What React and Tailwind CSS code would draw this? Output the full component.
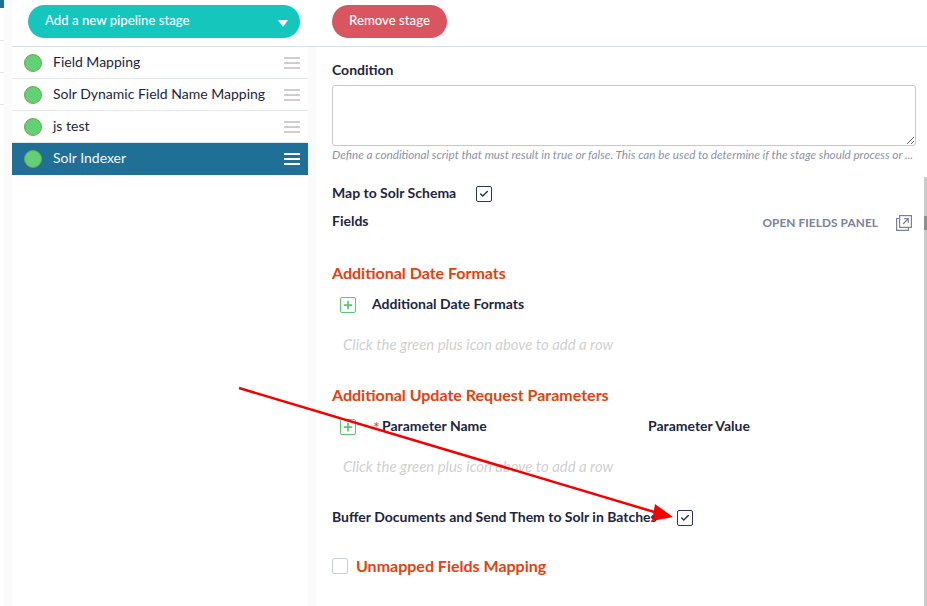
import React from 'react';
import { Check, Plus } from 'lucide-react';

const stages = [
  { name: 'Field Mapping' },
  { name: 'Solr Dynamic Field Name Mapping' },
  { name: 'js test' },
  { name: 'Solr Indexer', active: true },
];

const HINT = 'Click the green plus icon above to add a row';

const Handle = ({ active }) => (
  <div className="flex w-4 flex-col gap-[3px]">
    {[0, 1, 2].map((i) => (
      <div key={i} className={`h-[2px] ${active ? 'bg-white' : 'bg-[#cfcfcf]'}`} />
    ))}
  </div>
);

const StageRow = ({ stage }) => (
  <div
    className={`flex h-8 items-center border-b pl-3 pr-2 ${
      stage.active ? 'border-[#206f96] bg-[#206f96] text-[#f2f6f8]' : 'border-[#e3e6ea] text-[#1c2541]'
    }`}
  >
    <div className="h-[18px] w-[18px] rounded-full border border-[#6ba84f] bg-[#62d074]" />
    <span className="ml-[11px] flex-1 pb-[2px] text-sm">{stage.name}</span>
    <Handle active={stage.active} />
  </div>
);

const Checked = () => (
  <div className="flex h-4 w-4 items-center justify-center rounded-[2px] border border-[#2c3550] bg-white">
    <Check className="h-[10px] w-[10px] text-[#2c3550]" strokeWidth={3.5} />
  </div>
);

const AddBox = () => (
  <div className="flex h-4 w-4 items-center justify-center rounded-[2px] border border-[#5cc46e]">
    <Plus className="h-3 w-3 text-[#5cc46e]" strokeWidth={3.5} />
  </div>
);

const Heading = ({ children }) => (
  <h3 className="text-base font-bold leading-5 text-[#e2420f]">{children}</h3>
);

const Hint = () => <p className="pl-[11px] text-[14.9px] italic leading-5 text-[#d0d0d0]">{HINT}</p>;

export default function App() {
  return (
    <div
      className="relative flex h-[606px] w-[927px] overflow-hidden bg-white text-[#1c2541]"
      style={{ fontFamily: 'Lato, "Noto Sans", sans-serif' }}
    >
      {/* clipped nav on the far left */}
      <div className="flex w-1 flex-col">
        <div className="h-2 bg-[#206f96]" />
        <div className="mt-8 h-px bg-[#e3e6ea]" />
        <div className="mt-[31px] h-px bg-[#e3e6ea]" />
        <div className="mt-[31px] h-px bg-[#e3e6ea]" />
      </div>
      <div className="w-2 bg-[#fafafa]" />

      <div className="flex min-w-0 flex-1 flex-col">
        <div className="flex h-[47px] border-b border-[#d5dde5] bg-white pt-[5px]">
          <div className="ml-4 flex h-[33px] w-[272px] items-center justify-between rounded-[17px] bg-[#14c6bb] pl-[17px] pr-3 text-white">
            <span className="pb-[2px] text-[13.2px] font-medium">Add a new pipeline stage</span>
            <svg width="10" height="7" viewBox="0 0 10 7" className="mt-1">
              <path d="M0 0h10L5 7z" fill="#fff" />
            </svg>
          </div>
          <div className="ml-[32px] flex h-[33px] w-[115px] items-center justify-center rounded-[17px] bg-[#d9555f] pb-[2px] text-[13.2px] font-medium text-white">
            Remove stage
          </div>
        </div>

        <div className="flex flex-1">
          <div className="w-[296px]">
            {stages.map((stage) => (
              <StageRow key={stage.name} stage={stage} />
            ))}
          </div>
          <div className="w-2 bg-[#fafafa]" />

          <div className="flex-1 pl-4 pr-2 pt-[14px]">
            <label className="block text-sm font-bold leading-[18px]">Condition</label>
            <textarea className="mt-[6px] block h-[61px] w-[584px] resize-y rounded-[3px] border border-[#c8c8c8] bg-white" />
            <p className="w-[586px] whitespace-nowrap text-[11.7px] italic leading-4 text-[#8a93a6]">
              Define a conditional script that must result in true or false. This can be used to determine if the stage should process or ...
            </p>

            <div className="mt-[24px] flex h-4 items-center text-sm font-bold">
              <span className="w-[144px] pb-[2px]">Map to Solr Schema</span>
              <Checked />
            </div>
            <div className="mt-[9px] flex h-5 w-[580px] items-center justify-between">
              <span className="text-sm font-bold">Fields</span>
              <div className="mt-1 flex items-center gap-[18px]">
                <span className="text-[11.8px] font-bold tracking-[0.1px] text-[#7a8299]">OPEN FIELDS PANEL</span>
                <svg width="16" height="16" viewBox="0 0 16 16" fill="none" stroke="#7a8299" strokeWidth="1.2">
                  <path d="M3.5 3.5H.6v11.9h11.9v-2.9" />
                  <rect x="3.6" y=".6" width="11.8" height="11.8" />
                  <path d="M7 9l5-5M8.2 3.7h4.1v4.1" />
                </svg>
              </div>
            </div>

            <div className="mt-[32px]">
              <Heading>Additional Date Formats</Heading>
            </div>
            <div className="mt-[14px] flex h-4 items-center pl-2 text-sm font-bold">
              <AddBox />
              <span className="ml-4 pb-[2px]">Additional Date Formats</span>
            </div>
            <div className="mt-[21px]">
              <Hint />
            </div>

            <div className="mt-[31px]">
              <Heading>Additional Update Request Parameters</Heading>
            </div>
            <div className="mt-[14px] flex h-4 items-center pl-2 text-sm font-bold">
              <AddBox />
              <span className="ml-[17px] w-[9px] text-base font-normal leading-4 text-[#e2420f]">*</span>
              <span className="w-[266px] pb-[2px]">Parameter Name</span>
              <span className="pb-[2px]">Parameter Value</span>
            </div>
            <div className="mt-[21px]">
              <Hint />
            </div>

            <div className="mt-[33px] flex h-4 items-center text-sm font-bold">
              <span className="w-[345px]">Buffer Documents and Send Them to Solr in Batches</span>
              <div className="mt-[2px]">
                <Checked />
              </div>
            </div>

            <div className="mt-[31px] flex h-5 items-center">
              <div className="h-4 w-4 rounded-[2px] border border-[#c6d0de] bg-white" />
              <span className="ml-2 text-base font-bold text-[#e2420f]">Unmapped Fields Mapping</span>
            </div>
          </div>
        </div>
      </div>

      {/* scrollbar */}
      <div className="absolute bottom-0 right-0 top-[177px] w-[3px] bg-[#cbcbcb]">
        <div className="mt-[39px] h-[14px] bg-[#8f8f8f]" />
      </div>

      {/* annotation arrow */}
      <svg className="pointer-events-none absolute left-0 top-0" width="927" height="606">
        <line x1="239" y1="388" x2="656" y2="512.5" stroke="#f50000" strokeWidth="2.5" />
        <path d="M673 517L655 504L652 521Z" fill="#f50000" />
      </svg>
    </div>
  );
}
